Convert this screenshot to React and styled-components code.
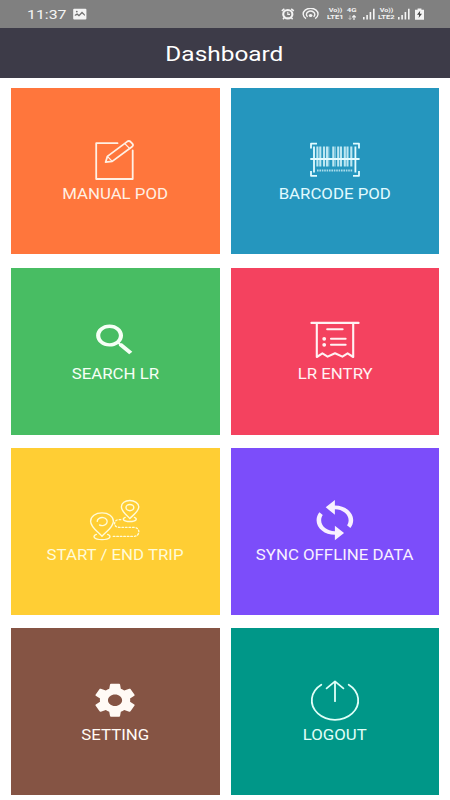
import React from "react";
import styled, { createGlobalStyle } from "styled-components";

const GlobalStyle = createGlobalStyle`
  * {
    box-sizing: border-box;
  }
  body {
    margin: 0;
    background-color: #fff;
    font-family: Roboto, "Liberation Sans", sans-serif;
  }
`;

const Main = styled.div`
  width: 450px;
  height: 800px;
  overflow: hidden;
  background-color: #fff;
`;

const StatusBar = styled.div`
  display: flex;
  align-items: center;
  height: 28px;
  padding: 0 26px 0 27px;
  background-color: #808080;
  color: #f4f4f4;
`;

const Clock = styled.div`
  width: 40px;
  margin-right: 6px;
  padding-top: 1px;
  font-size: 13px;
  line-height: 28px;
  white-space: nowrap;
`;

const Wide = styled.span`
  display: inline-block;
  transform: scaleX(${(props) => props.$scale});
  transform-origin: ${(props) => props.$origin || "center"};
`;

const StatusRight = styled.div`
  display: flex;
  align-items: center;
  height: 28px;
  margin-left: auto;
`;

const StatusIcon = styled.svg`
  display: block;
  flex: none;
  margin-left: ${(props) => props.$gap || 0}px;
`;

const Network = styled.div`
  display: flex;
  flex-direction: column;
  align-items: center;
  width: ${(props) => props.$width}px;
  margin-left: ${(props) => props.$gap || 0}px;
  font-size: 5.8px;
  font-weight: 700;
  line-height: 7px;
  white-space: nowrap;
`;

const Header = styled.div`
  display: flex;
  align-items: center;
  justify-content: center;
  height: 50px;
  background-color: #3d3b48;
  color: #fff;
  font-size: 20px;
  line-height: 24px;
  padding: 2px 2px 0 0;
`;

const Menu = styled.div`
  display: grid;
  grid-template-columns: 1fr 1fr;
  grid-auto-rows: 166.8px;
  gap: 13.5px 11px;
  padding: 9.6px 11px 0;
`;

const Tile = styled.div`
  display: flex;
  flex-direction: column;
  align-items: center;
  padding-top: 48px;
  background-color: ${(props) => props.$color};
  color: ${(props) => props.$ink};
`;

const TileIcon = styled.svg`
  display: block;
  width: 60px;
  height: 48px;
  flex: none;
  fill: none;
  stroke: currentColor;
  stroke-linecap: round;
  stroke-linejoin: round;
`;

const TileLabel = styled.div`
  margin-top: ${(props) => (props.$low ? 3 : 2)}px;
  font-size: 14px;
  line-height: 16px;
  white-space: nowrap;
`;

const icons = {
  manual: (
    <g strokeWidth="1.8">
      <path d="M2.5 7.2H-18.8V43H17.7V14.5" />
      <path d="M-9.4 26.2L-7.6 20.4L12.2 5.6Q14 4.4 15.6 5.8L17.4 7.6Q18.8 9.2 17 10.8L-2.8 25.4Z" />
      <path d="M9.8 7.6L14.8 12.6M-7.6 20.4L-2.8 25.4" strokeWidth="1.3" />
    </g>
  ),
  barcode: (
    <g strokeLinecap="butt">
      <path
        d="M-24 12.5V7.7H-18M18 7.7H24V12.5M-24 35V39.8H-18M18 39.8H24V35"
        strokeWidth="1.8"
      />
      <path d="M-21 10.5V36.5M20.4 10.5V36.5" strokeWidth="1.8" />
      <path
        d="M-17.6 10.5V30.5M-14.7 10.5V30.5M-11 10.5V30.5M-8 10.5V30.5M-1.7 10.5V30.5M3.2 10.5V30.5M6 10.5V30.5M9.8 10.5V30.5M12.5 10.5V30.5M16.3 10.5V30.5"
        strokeWidth="2.1"
        opacity="0.8"
      />
      <path d="M-6.2 10.5V30.5M0.2 10.5V30.5" strokeWidth="0.9" opacity="0.7" />
      <path d="M-24.7 23H24.6" strokeWidth="2" />
      <path d="M-18 34.5H18" strokeWidth="2" strokeDasharray="1.6 0.8" opacity="0.7" />
    </g>
  ),
  search: (
    <path
      transform="translate(-25.1 3.4) scale(2.07 1.7)"
      fill="currentColor"
      stroke="none"
      d="M15.5 14h-.79l-.28-.27C15.41 12.59 16 11.11 16 9.5 16 5.91 13.09 3 9.5 3S3 5.91 3 9.5 5.91 16 9.5 16c1.61 0 3.09-.59 4.23-1.57l.27.28v.79l5 4.99L20.49 19l-4.99-5zm-6 0C7.01 14 5 11.99 5 9.5S7.01 5 9.5 5 14 7.01 14 9.5 11.99 14 9.5 14z"
    />
  ),
  entry: (
    <g strokeWidth="2.1">
      <path d="M-23.6 6.9H23.6" />
      <path d="M-18.2 7V41L-12.6 37.4L-7.4 40.6L0 37.2L7.4 40.6L12.6 37.4L18.2 41V7" />
      <path d="M-7.8 13.2H7.6M-4 22.8H10.6M-4 28.8H10.6" />
      <path d="M-10.8 22.8h.01M-10.8 28.8h.01" strokeWidth="3.8" />
    </g>
  ),
  trip: (
    <g strokeWidth="1.4">
      <path d="M-13 40.3C-16.4 36.2-24.4 31.4-24.4 25.2C-24.4 20.4-19.4 16.9-13 16.9S-1.6 20.4-1.6 25.2C-1.6 31.4-9.6 36.2-13 40.3Z" />
      <path d="M-17.8 25.4A5 4 0 1 1 -15.4 29" />
      <path d="M-18.6 38.4C-23 40-21.4 43.6-13 43.6S-3 40-7.4 38.4" />
      <path d="M14.8 22.6C12.2 19.4 6.4 15.8 6.4 10.8C6.4 7.2 10 4.5 14.8 4.5S23.8 7.2 23.8 10.8C23.8 15.8 17.4 19.4 14.8 22.6Z" />
      <ellipse cx="14.9" cy="11.6" rx="3.9" ry="3.1" />
      <path d="M10.2 21.4C6.6 22.8 8.2 25.5 14.8 25.5S23 22.8 19.4 21.4" />
      <path
        d="M5.8 23.7H4C-1.8 23.7-2 31.3 4 31.3H18.6C25.6 31.3 25.6 40.4 18.6 40.4H-3.4"
        strokeWidth="1.3"
        strokeDasharray="1.6 1.9"
      />
    </g>
  ),
  sync: (
    <path
      transform="translate(-27.6 2.2) scale(2.29 1.83)"
      fill="currentColor"
      stroke="none"
      d="M12 4V1L8 5l4 4V6c3.31 0 6 2.69 6 6 0 1.01-.25 1.97-.7 2.8l1.46 1.46C19.54 15.03 20 13.57 20 12c0-4.42-3.58-8-8-8zm0 14c-3.31 0-6-2.69-6-6 0-1.01.25-1.97.7-2.8L5.24 7.74C4.46 8.97 4 10.43 4 12c0 4.42 3.58 8 8 8v3l4-4-4-4v3z"
    />
  ),
  setting: (
    <path
      transform="translate(-24.2 4.4) scale(2.02 1.65)"
      fill="currentColor"
      stroke="none"
      d="M19.43 12.98c.04-.32.07-.64.07-.98s-.03-.66-.07-.98l2.11-1.65c.19-.15.24-.42.12-.64l-2-3.46c-.12-.22-.39-.3-.61-.22l-2.49 1c-.52-.4-1.08-.73-1.69-.98l-.38-2.65C14.46 2.18 14.25 2 14 2h-4c-.25 0-.46.18-.49.42l-.38 2.65c-.61.25-1.17.59-1.69.98l-2.49-1c-.23-.09-.49 0-.61.22l-2 3.46c-.13.22-.07.49.12.64l2.11 1.65c-.04.32-.07.65-.07.98s.03.66.07.98l-2.11 1.65c-.19.15-.24.42-.12.64l2 3.46c.12.22.39.3.61.22l2.49-1c.52.4 1.08.73 1.69.98l.38 2.65c.03.24.24.42.49.42h4c.25 0 .46-.18.49-.42l.38-2.65c.61-.25 1.17-.59 1.69-.98l2.49 1c.23.09.49 0 .61-.22l2-3.46c.12-.22.07-.49-.12-.64l-2.11-1.65zM12 15.5c-1.93 0-3.5-1.57-3.5-3.5s1.57-3.5 3.5-3.5 3.5 1.57 3.5 3.5-1.57 3.5-3.5 3.5z"
    />
  ),
  logout: (
    <g strokeWidth="1.8">
      <path d="M-13.7 8.8A23.2 19.4 0 1 0 13.7 8.8" />
      <path d="M0 25.2V5.6M-8.4 12.4L0 5.4L8.4 12.4" />
    </g>
  ),
};

const menuList = [
  { label: "MANUAL POD", icon: "manual", color: "#ff763c", ink: "#fff0e4" },
  { label: "BARCODE POD", icon: "barcode", color: "#2596be", ink: "#e2fbff" },
  { label: "SEARCH LR", icon: "search", color: "#48bd63", ink: "#f6fff6" },
  { label: "LR ENTRY", icon: "entry", color: "#f4425f", ink: "#fff2f3" },
  { label: "START / END TRIP", icon: "trip", color: "#ffce34", ink: "#fffbd8" },
  { label: "SYNC OFFLINE DATA", icon: "sync", color: "#7c4dfa", ink: "#f8f0ff" },
  { label: "SETTING", icon: "setting", color: "#855444", ink: "#fffaf5" },
  { label: "LOGOUT", icon: "logout", color: "#009788", ink: "#e0fff8" },
];

function Signal({ gap }) {
  return (
    <StatusIcon $gap={gap} width="12" height="12" viewBox="0 0 12 12" fill="currentColor">
      <path d="M0 9h1.6v2.5H0zM3.3 7h1.6v4.5H3.3zM6.6 4h1.6v7.5H6.6zM10 .8h1.6v10.7H10z" />
    </StatusIcon>
  );
}

export default function App() {
  return (
    <Main>
      <GlobalStyle />
      <StatusBar>
        <Clock>
          <Wide $scale={1.22} $origin="left">11:37</Wide>
        </Clock>
        <StatusIcon width="14" height="12" viewBox="0 0 14 12">
          <rect x="0.2" y="0.8" width="13.2" height="10.6" rx="1" fill="currentColor" />
          <path d="M1.8 8V6.8L4.2 5.2L6 6.8L9 3.6L11.9 6.6V8L9 5.6L6 8.6L4.2 7Z" fill="#707070" />
          <circle cx="3.8" cy="3.6" r="0.9" fill="#707070" />
        </StatusIcon>
        <StatusRight>
          <StatusIcon width="14" height="12" viewBox="0 0 14 12" fill="none" stroke="currentColor">
            <ellipse cx="6.8" cy="6.2" rx="4.6" ry="4.2" strokeWidth="2.1" />
            <path d="M.8 2.8L3.4.8M12.8 2.8L10.2.8M3.4 9.6L2 11.2M10.2 9.6L11.6 11.2" strokeWidth="1.5" />
            <path d="M6.8 3.8V6.4H9" strokeWidth="1.1" />
          </StatusIcon>
          <StatusIcon $gap={7} width="18" height="12" viewBox="0 0 18 12" fill="none" stroke="currentColor">
            <path d="M4 10.6A7.4 5.8 0 1 1 13.2 10.6" strokeWidth="1.4" />
            <path d="M5.6 8.8A4.2 3.3 0 1 1 11.6 8.8" strokeWidth="1.4" />
            <ellipse cx="8.6" cy="7.4" rx="1.8" ry="1.5" fill="currentColor" stroke="none" />
          </StatusIcon>
          <Network $width={18} $gap={6}>
            <Wide $scale={1.25}>Vo))</Wide>
            <Wide $scale={1.3}>LTE1</Wide>
          </Network>
          <Network $width={12} $gap={2}>
            <Wide $scale={1.35}>4G</Wide>
            <svg width="10" height="7" viewBox="0 -0.5 10 7" fill="none" stroke="currentColor">
              <path d="M3 .8V5M1.4 3.4L3 5L4.6 3.4" strokeWidth="0.9" opacity="0.6" />
              <path d="M7 5.4V1.2M5.2 2.9L7 1.1L8.8 2.9" strokeWidth="1.2" />
            </svg>
          </Network>
          <Signal gap={5} />
          <Network $width={18} $gap={2}>
            <Wide $scale={1.25}>Vo))</Wide>
            <Wide $scale={1.3}>LTE2</Wide>
          </Network>
          <Signal gap={3} />
          <StatusIcon $gap={5} width="9" height="12" viewBox="0 0 9 12">
            <path d="M0 1.8H2.6V.4H6.4V1.8H9V11.8H0Z" fill="currentColor" />
            <path d="M5.2 2.8L2 6.8H4.2L3.6 10L7 5.8H4.8Z" fill="#444" />
          </StatusIcon>
        </StatusRight>
      </StatusBar>
      <Header>
        <Wide $scale={1.22}>Dashboard</Wide>
      </Header>
      <Menu>
        {menuList.map((menu, index) => (
          <Tile key={menu.label} $color={menu.color} $ink={menu.ink}>
            <TileIcon viewBox="-30 0 60 48">{icons[menu.icon]}</TileIcon>
            <TileLabel $low={index > 3}>
              <Wide $scale={1.2}>{menu.label}</Wide>
            </TileLabel>
          </Tile>
        ))}
      </Menu>
    </Main>
  );
}
